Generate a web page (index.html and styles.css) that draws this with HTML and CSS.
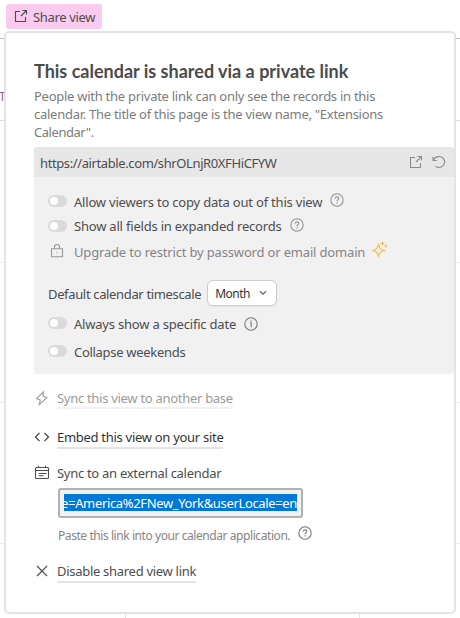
FILE: index.html
```html
<!DOCTYPE html>
<html lang="en">
<head>
<meta charset="utf-8">
<title>Share view</title>
<link rel="stylesheet" href="styles.css">
</head>
<body>
<svg class="defs" width="0" height="0">
  <symbol id="external" viewBox="0 0 14 14"><path d="M6 2.5H1.5v10h10V8M8.5 1.5h4v4M12.5 1.5 7 7"/></symbol>
  <symbol id="help" viewBox="0 0 14 14"><circle cx="7" cy="7" r="6.2"/><path d="M5.2 5.6C5.2 3.3 8.8 3.4 8.8 5.5 8.8 6.8 7 6.7 7 8.2M7 9.3v1.1"/></symbol>
</svg>
<header class="toolbar">
  <button class="share"><svg class="icon"><use href="#external"/></svg><span>Share view</span></button>
</header>
<main class="calendar">
  <div class="week first"><span class="event">T</span></div>
  <div class="week"></div>
  <div class="week"></div>
  <div class="week"></div>
  <div class="week last"><i></i><i></i></div>
</main>
<section class="popover">
  <h1><span>This calendar is shared via a private link</span></h1>
  <p class="intro"><span>People with the private link can only see the records in this</span><br><span>calendar. The title of this page is the view name, "Extensions</span><br><span class="in3">Calendar".</span></p>
  <div class="panel">
    <div class="url"><span class="address">https://airtable.com/shrOLnjR0XFHiCFYW</span>
      <svg class="icon"><use href="#external"/></svg>
      <svg class="icon reload" viewBox="0 0 14 14"><path d="M1 1.8v3.7h3.7M1.2 5.3C3 1.2 8.2.2 11 3.2c4.3 4.8-1.6 12-7.4 8"/></svg>
    </div>
    <div class="options">
      <div class="option"><i class="toggle"></i><span>Allow viewers to copy data out of this view</span><svg class="icon help"><use href="#help"/></svg></div>
      <div class="option fields"><i class="toggle"></i><span>Show all fields in expanded records</span><svg class="icon help"><use href="#help"/></svg></div>
      <div class="option locked"><svg class="icon lock" viewBox="0 0 14 14"><path d="M1.5 4.8h11v8h-11zM4.5 4.8V3a2.5 2.5 0 0 1 5 0v1.8M7 8.2v1"/></svg><span>Upgrade to restrict by password or email domain</span><svg class="icon sparkle" viewBox="0 0 16 16"><path d="M6.5 3.5 8.2 7.8 12.5 9.5 8.2 11.2 6.5 15.2 4.8 11.2.8 9.5 4.8 7.8zM10.5.5v4M8.5 2.5h4M13.8 3.5v3M12.3 5h3"/></svg></div>
      <div class="timescale"><span class="caption">Default calendar timescale</span><button class="select"><span>Month</span><svg class="chevron" viewBox="0 0 8 6"><path d="m1 1.2 3 3 3-3"/></svg></button></div>
      <div class="option specific"><i class="toggle"></i><span>Always show a specific date</span><svg class="icon info" viewBox="0 0 14 14"><circle cx="7" cy="7" r="6.2"/><path d="M6 6h1.2v4.2M7 3.6v1.2"/></svg></div>
      <div class="option weekends"><i class="toggle"></i><span>Collapse weekends</span></div>
    </div>
  </div>
  <div class="action sync"><svg class="icon" viewBox="0 0 14 14"><path d="M8.4.8 1.6 7.6 5.3 9.1 4.2 13.6 11.8 6.6 8 5.1z"/></svg><a>Sync this view to another base</a></div>
  <div class="action embed"><svg class="icon wide" viewBox="0 0 16 14"><path d="M5.5 2.8 1.5 7l4 4.2M10.5 2.8l4 4.2-4 4.2"/></svg><a>Embed this view on your site</a></div>
  <div class="action external"><svg class="icon wide" viewBox="0 0 16 16"><rect x="1.5" y="2.5" width="13" height="11" rx="1"/><path d="M1.5 5.5h13M4.5.7v1.8M11.5.7v1.8M4.5 8.5h8M4.5 10.8h5"/></svg><span>Sync to an external calendar</span></div>
  <div class="feed"><div class="selection"><span>e=America%2FNew_York&amp;userLocale=en</span></div></div>
  <div class="hint"><span>Paste this link into your calendar application.</span><svg class="icon"><use href="#help"/></svg></div>
  <div class="action disable"><svg class="icon" viewBox="0 0 14 14"><path d="m2 2 10 10M12 2 2 12"/></svg><a>Disable shared view link</a></div>
</section>
</body>
</html>
```
FILE: styles.css
```css
* { box-sizing: border-box; }
body { margin: 0; width: 460px; height: 618px; overflow: hidden; position: relative; background: #fff; color: #4d4d4d; font: 13px/18px "Noto Sans", sans-serif; }
.defs { position: absolute; }
span, a { white-space: nowrap; }
button { font: inherit; border: 0; margin: 0; color: inherit; }
.icon { width: 14px; height: 14px; flex: none; fill: none; stroke: currentColor; stroke-width: 1.1; overflow: visible; }
.toolbar { height: 39px; padding: 4px 6px; border-bottom: 1px solid #bdbdbd; }
.share { width: 96px; height: 25px; border-radius: 3px; background: #facbef; display: flex; align-items: center; gap: 5px; padding: 0 0 0 8px; letter-spacing: -.35px; }
.share .icon { margin-top: -1px; }
.calendar { display: grid; grid-template-rows: 82px 142px 140px 141px 75px; }
.week { border-bottom: 1px solid #ededed; }
.first { padding-top: 48px; border-color: #ddd; }
.event { color: #8d6078; font-size: 12px; margin-left: -1px; }
.last { display: grid; grid-template-columns: 126px 234px; border: 0; }
.last i { border-right: 1px solid #e6e6e6; }
.popover { position: absolute; left: 4px; top: 31px; width: 452px; height: 583px; border: 2px solid #e4e4e4; border-radius: 5px; background: #fff; padding: 27px 0 0 28px; }
h1 { margin: 0; height: 23px; font: bold 18px/23px Lato, sans-serif; color: #4b4b4b; }
.intro { margin: 4px 0 6px; height: 54px; color: #7c7c7c; letter-spacing: -.27px; }
.in3 { letter-spacing: -.45px; }
.panel { height: 227px; border-radius: 3px; overflow: hidden; background: #f1f1f1; }
.url { height: 30px; background: #e7e7e7; display: flex; align-items: center; padding: 2px 8px 0 6px; gap: 9px; }
.url .icon { color: #8b8b8b; margin-top: -3px; }
.address { flex: 1; letter-spacing: -.39px; }
.options { padding: 12px 14px 0; }
.option { height: 25px; display: flex; align-items: center; letter-spacing: -.2px; }
.toggle { width: 19px; height: 12px; border-radius: 6px; background: #dadada; margin-right: 7px; margin-top: -2px; padding: 2px; flex: none; }
.toggle::before { content: ""; display: block; width: 8px; height: 8px; border-radius: 50%; background: #fff; }
.help, .info { margin-left: 8px; margin-top: -3px; color: #929292; }
.info { margin-top: 0; color: #777; }
.fields span { margin-top: -1px; }
.locked { height: 28px; color: #858585; letter-spacing: -.17px; }
.locked span { margin-top: -2px; }
.lock { margin: -4px 10px 0 2px; color: #999; }
.sparkle { width: 16px; height: 16px; margin: -8px 0 0 7px; color: #f8bd3e; }
.timescale { margin-top: 13px; height: 26px; display: flex; align-items: center; gap: 6px; }
.caption { letter-spacing: -.35px; padding-top: 1px; }
.select { width: 70px; height: 26px; padding: 1px 9px 0 7px; background: #fff; border: 1px solid #cecece; border-radius: 6px; box-shadow: 0 1px 2px #0001; display: flex; align-items: center; justify-content: space-between; font-size: 12px; letter-spacing: -.5px; color: #333; }
.chevron { width: 8px; height: 6px; fill: none; stroke: #666; stroke-width: 1.3; margin-top: -2px; }
.specific { margin-top: 5px; }
.specific span { padding-top: 1px; }
.weekends { margin-top: 3px; letter-spacing: -.3px; }
.weekends .toggle { margin-top: -1px; }
.action { height: 20px; display: flex; align-items: flex-start; letter-spacing: -.29px; }
.action > .icon { margin: 2px 8px 0 1px; }
.action > .wide { width: 16px; margin: 2px 7px 0 0; }
.action a { border-bottom: 2px solid #e4e4e4; height: 21px; }
.sync { margin-top: 14px; color: #9b9b9b; }
.sync > .icon { margin-top: 3px; }
.sync a { border-color: #f1f1f1; padding-top: 1px; }
.embed { margin-top: 20px; color: #333; }
.external { margin-top: 16px; }
.external > .wide { height: 16px; margin-top: 1px; }
.feed { width: 245px; height: 30px; margin: 4px 0 0 24px; border: 2px solid #b1b1b1; border-radius: 3px; background: #f1f1f1; padding: 4px; }
.selection { height: 17px; width: 233px; background: #0078d7; color: #fff; overflow: hidden; display: flex; justify-content: flex-end; line-height: 18px; letter-spacing: -.35px; }
.hint { display: flex; margin: 8px 0 0 24px; height: 18px; font-size: 12px; letter-spacing: -.43px; color: #858585; }
.hint span { padding-top: 1px; }
.hint .icon { margin: 0 0 0 8px; color: #777; }
.disable { margin-top: 18px; }
```
